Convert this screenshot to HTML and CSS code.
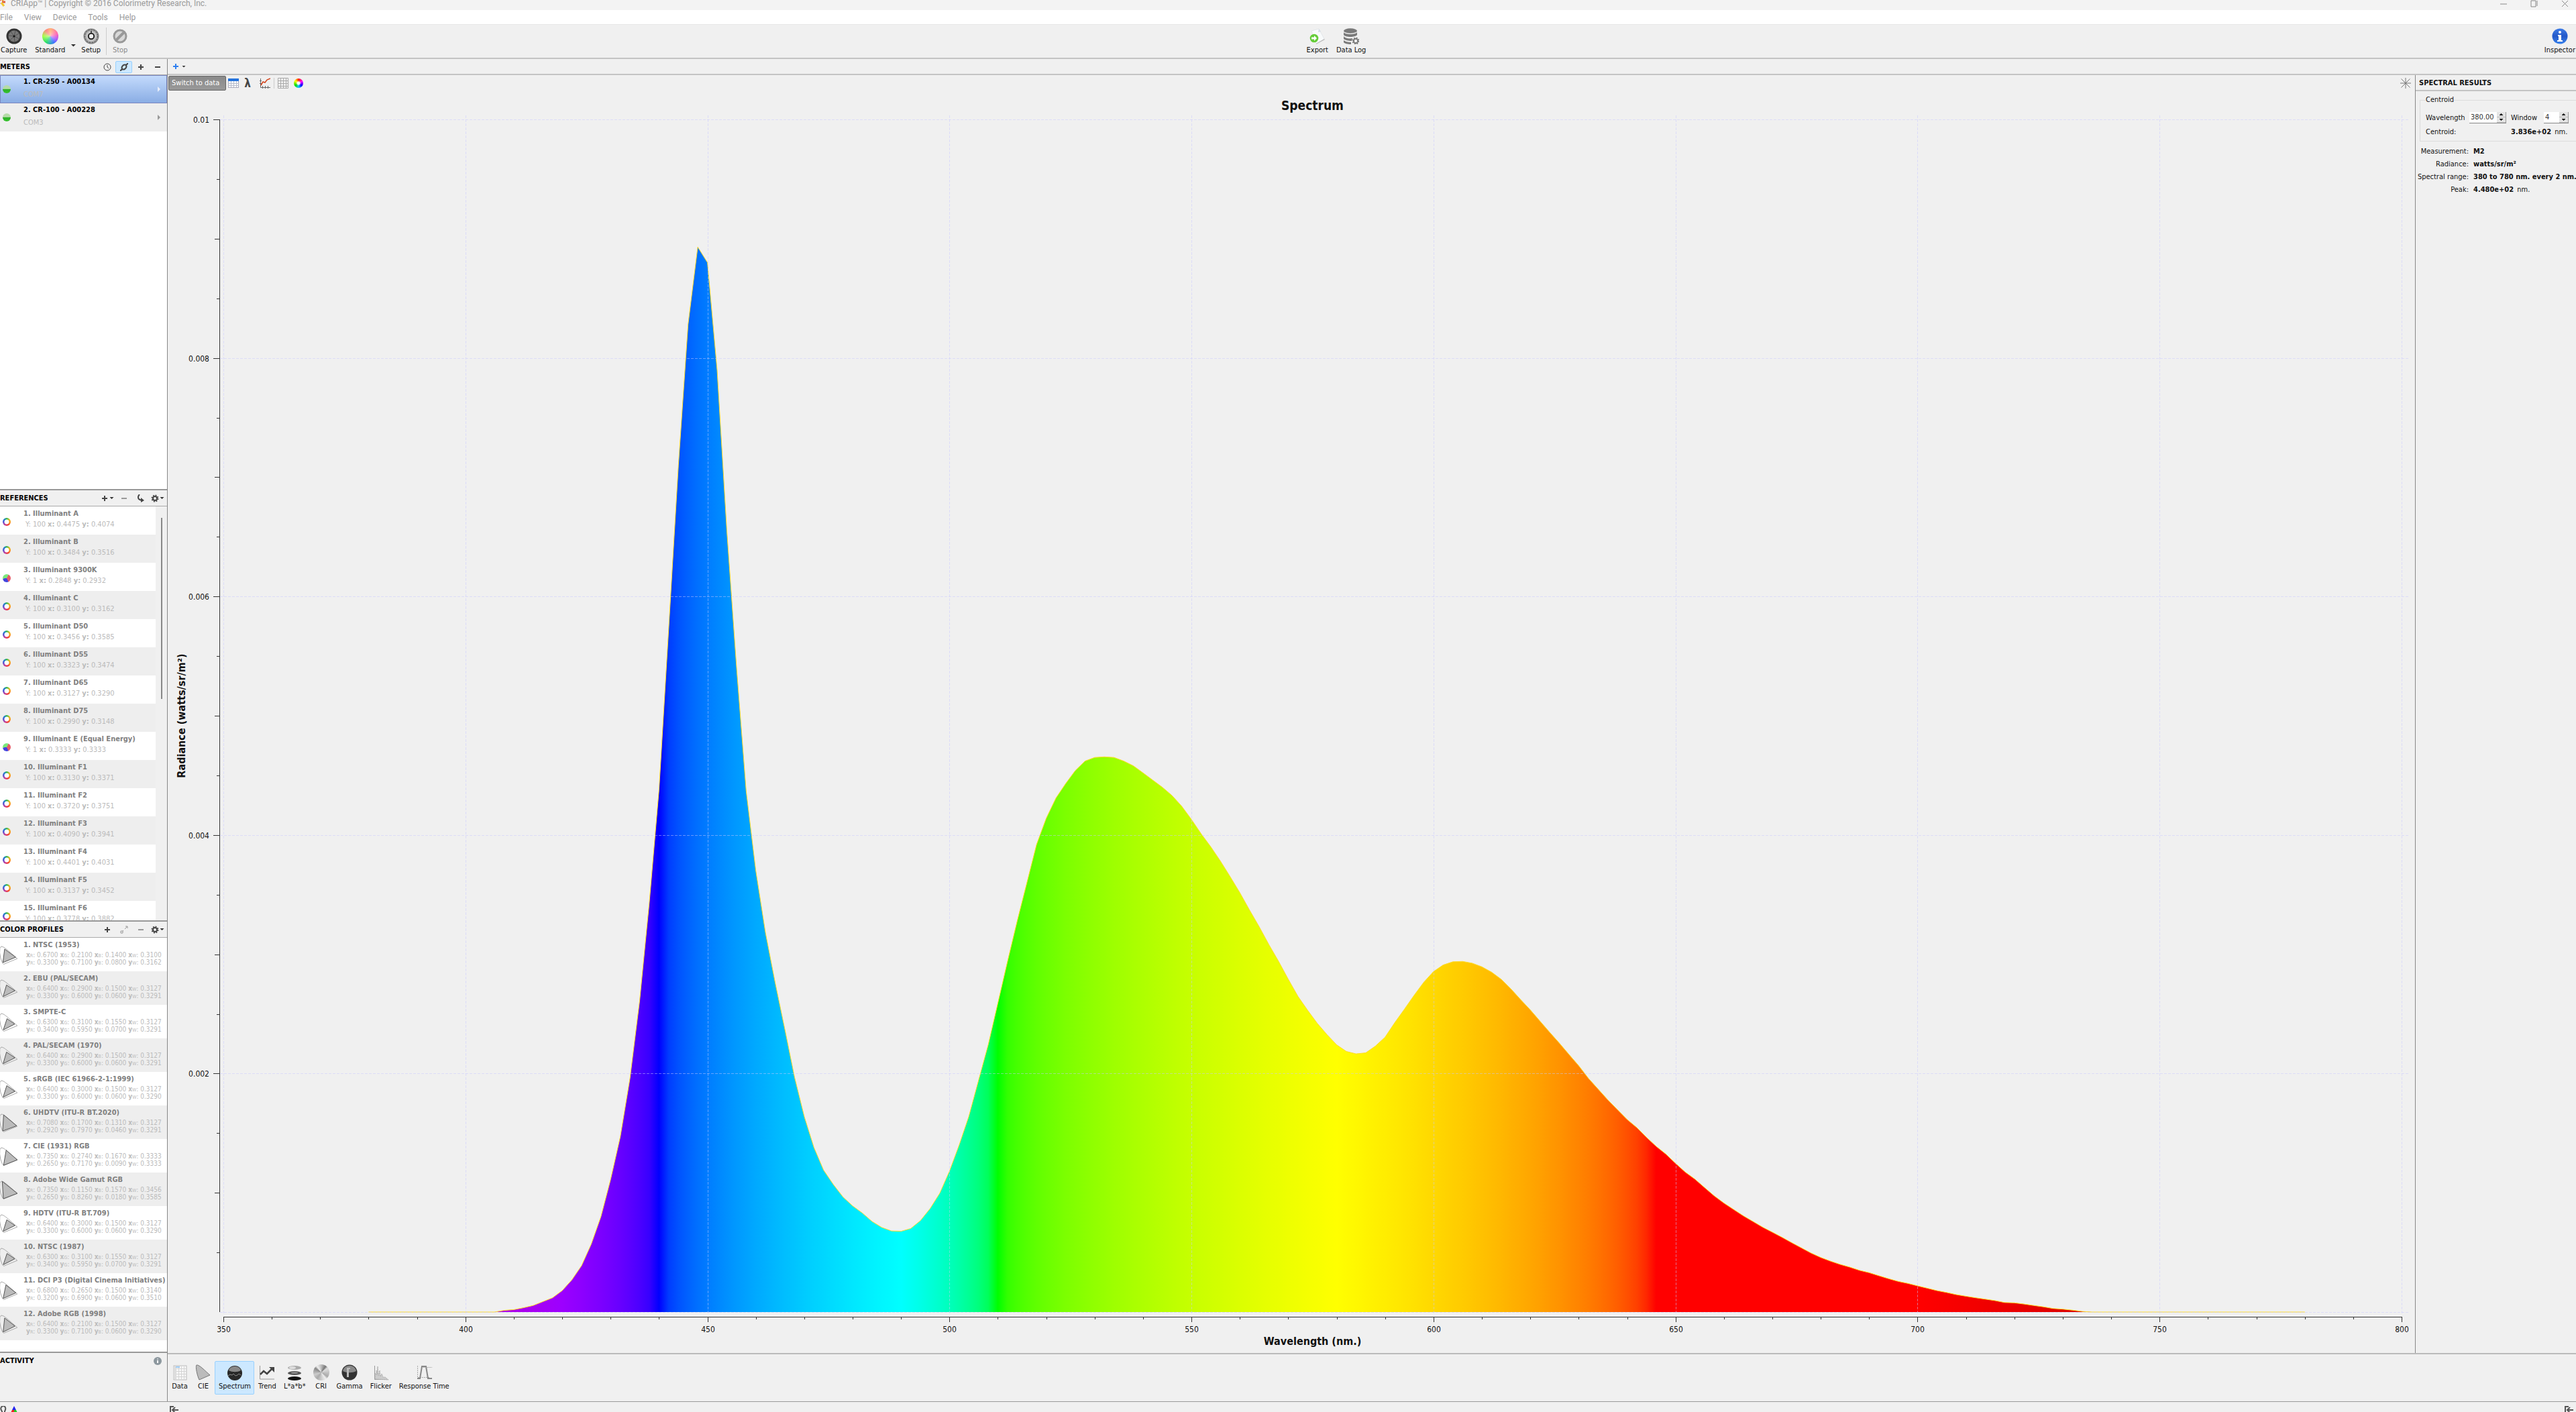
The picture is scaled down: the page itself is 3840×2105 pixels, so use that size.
FILE: index.html
```html
<!DOCTYPE html>
<html lang="en">

<head>
    <meta charset="UTF-8">
    <meta name="viewport" content="width=device-width, initial-scale=1.0">
    <title>CRIApp</title>
    <link rel="stylesheet" href="styles.css">
</head>

<body>

    <header class="titlebar">
        <svg class="app-logo" viewBox="0 0 16 16"><g fill="none" stroke-width="3"><path d="M0 7h6" stroke="#7a9ee0"/><path d="M4 2l3 4" stroke="#e86a4a"/><path d="M9 6l4-4" stroke="#f0a030"/><path d="M9 8h5" stroke="#e0603a"/><path d="M8 9l4 5" stroke="#f2c830"/><path d="M6 9l-4 4" stroke="#b090d0"/></g></svg>
        <span class="app-title">CRIApp™ | Copyright © 2016 Colorimetry Research, Inc.</span>
        <div class="window-buttons">
            <button aria-label="Minimize"><svg viewBox="0 0 12 12"><path d="M1 6h10"/></svg></button>
            <button aria-label="Restore"><svg viewBox="0 0 12 12"><path d="M1 1h7v9h-7zM10 1v8"/></svg></button>
            <button aria-label="Close"><svg viewBox="0 0 12 12"><path d="M1 1l9 9M10 1l-9 9"/></svg></button>
        </div>
    </header>

    <nav class="menubar">
        <button>File</button>
        <button>View</button>
        <button>Device</button>
        <button>Tools</button>
        <button>Help</button>
    </nav>

    <div class="toolbar">
        <div class="tool-group">
            <button class="tool">
                <svg viewBox="0 0 24 24"><circle cx="12" cy="12" r="11.5" fill="#333"/><circle cx="12" cy="12" r="8.5" fill="#777"/><path d="M12 12l2-8M12 12l7-4M12 12l8 4M12 12l1 8M12 12l-6 6M12 12l-8-1M12 12l-5-7" stroke="#444" stroke-width=".7"/><circle cx="12" cy="12" r="1.5" fill="#111"/></svg>
                <span>Capture</span>
            </button>
            <button class="tool">
                <i class="wheel"></i>
                <span>Standard</span>
            </button>
            <button class="caret-button" aria-label="Measurement mode"><i class="caret"></i></button>
            <button class="tool">
                <svg viewBox="0 0 24 24"><defs><radialGradient id="knob"><stop offset=".3" stop-color="#eee"/><stop offset=".75" stop-color="#aaa"/><stop offset="1" stop-color="#777"/></radialGradient></defs><circle cx="12" cy="12" r="11.5" fill="url(#knob)"/><circle cx="12" cy="12" r="9.5" fill="none" stroke="#444" stroke-dasharray="2 2"/><circle cx="12" cy="12" r="4.2" fill="#eee" stroke="#222" stroke-width="2"/><path d="M12 4v4" stroke="#222" stroke-width="1.5"/></svg>
                <span>Setup</span>
            </button>
            <i class="divider"></i>
            <button class="tool" disabled>
                <svg viewBox="0 0 24 24"><circle cx="12" cy="12" r="9" fill="#d8d8d8" stroke="#999" stroke-width="3"/><path d="M6 18L18 6" stroke="#999" stroke-width="4"/></svg>
                <span>Stop</span>
            </button>
        </div>
        <div class="tool-group">
            <button class="tool">
                <svg viewBox="0 0 24 24"><path d="M3 4L14 1l8 15-12 7z" fill="#f8fafb" stroke="#d9dde0" stroke-width=".6"/><path d="M14 1l-1 5 4-1z" fill="#d5dce6"/><path d="M10 24l13-7-1-1-12 7z" fill="#bbb"/><circle cx="7" cy="15" r="6.3" fill="#65cc38"/><path d="M3 13.5h4v-2.5l4 4-4 4v-2.500h-4z" fill="#fff"/></svg>
                <span>Export</span>
            </button>
            <button class="tool">
                <svg viewBox="0 0 24 24"><g fill="#7a7a7a"><ellipse cx="11" cy="4" rx="10" ry="3.700"/><path d="M1 6c2 4 18 4 20 0v4c-2 4-18 4-20 0zM1 12c2 3 8 4 13 3l-1 4c-5 0-10-1-12-3zM1 18c2 2 6 3 11 3v3c-5 0-10-1-11-3z"/></g><circle cx="19" cy="19" r="3.200" fill="none" stroke="#7a7a7a" stroke-width="2"/><circle cx="19" cy="19" r="4.700" fill="none" stroke="#7a7a7a" stroke-width="1.600" stroke-dasharray="2 1.700"/></svg>
                <span>Data Log</span>
            </button>
        </div>
        <div class="tool-group">
            <button class="tool">
                <svg viewBox="0 0 24 24"><defs><linearGradient id="info" x2="0" y2="1"><stop stop-color="#3d7be6"/><stop offset=".5" stop-color="#2358c8"/><stop offset="1" stop-color="#3a83ec"/></linearGradient></defs><circle cx="12" cy="12" r="11.500" fill="url(#info)"/><circle cx="12" cy="6" r="2" fill="#fff"/><path d="M9 10h5v8h2v2H8v-2h2v-6H9z" fill="#fff"/></svg>
                <span>Inspector</span>
            </button>
        </div>
    </div>

    <div class="workspace">
        <aside class="sidebar">
            <section class="panel">
                <div class="panel-head">
                    <h2>METERS</h2>
                    <button aria-label="History"><svg viewBox="0 0 12 12"><circle cx="6" cy="6" r="5"/><path d="M6 3v3l2 2"/></svg></button>
                    <button class="pressed" aria-label="Connect"><svg viewBox="0 0 12 12"><path d="M3.500 9C1.500 7 3 4.500 5 3c2-1 4-.5 4.500 1M8.500 3C10.500 5 9 7.500 7 9c-2 1-4 .5-4.500-1M0 12l3-3M9 3l3-3" stroke-width="2"/></svg></button>
                    <button aria-label="Add meter"><svg viewBox="0 0 12 12"><path d="M2 6h8M6 2v8" stroke-width="2"/></svg></button>
                    <button aria-label="Remove meter"><svg viewBox="0 0 12 12"><path d="M2 6h8" stroke-width="2"/></svg></button>
                </div>
                <ul class="meters">
                    <li class="meter selected">
                        <i class="led"></i>
                        <div><strong>1. CR-250 - A00134</strong><small>COM7</small></div>
                        <i class="arrow"></i>
                    </li>
                    <li class="meter">
                        <i class="led"></i>
                        <div><strong>2. CR-100 - A00228</strong><small>COM3</small></div>
                        <i class="arrow"></i>
                    </li>
                </ul>
            </section>

            <section class="panel">
                <div class="panel-head">
                    <h2>REFERENCES</h2>
                    <button aria-label="Add reference"><svg viewBox="0 0 12 12"><path d="M2 6h8M6 2v8" stroke-width="2"/></svg><i class="caret"></i></button>
                    <button aria-label="Remove reference" disabled><svg viewBox="0 0 12 12"><path d="M2 6h8" stroke-width="2"/></svg></button>
                    <button aria-label="Apply"><svg viewBox="0 0 12 12"><path d="M4 0C1 3 1 8 7 8.500" stroke-width="2"/><path d="M6 5l5 4-5 3z" fill="#444" stroke="none"/></svg></button>
                    <button aria-label="Reference options"><svg viewBox="0 0 12 12"><circle cx="6" cy="6" r="3" stroke-width="2"/><circle cx="6" cy="6" r="4.600" stroke-width="1.800" stroke-dasharray="1.900 1.710"/></svg><i class="caret"></i></button>
                </div>
                <div class="scroller">
                    <ul class="references" id="references"></ul>
                    <div class="scrollbar"><i></i></div>
                </div>
            </section>

            <section class="panel">
                <div class="panel-head">
                    <h2>COLOR PROFILES</h2>
                    <button aria-label="Add profile"><svg viewBox="0 0 12 12"><path d="M2 6h8M6 2v8" stroke-width="2"/></svg></button>
                    <button aria-label="Expand" disabled><svg viewBox="0 0 12 12"><path d="M1 8v3h3v-3zM8 1h3v3M4 8l1-1M7 5l4-4"/></svg></button>
                    <button aria-label="Remove profile" disabled><svg viewBox="0 0 12 12"><path d="M2 6h8" stroke-width="2"/></svg></button>
                    <button aria-label="Profile options"><svg viewBox="0 0 12 12"><circle cx="6" cy="6" r="3" stroke-width="2"/><circle cx="6" cy="6" r="4.600" stroke-width="1.800" stroke-dasharray="1.900 1.710"/></svg><i class="caret"></i></button>
                </div>
                <ul class="profiles" id="profiles"></ul>
            </section>

            <section class="panel activity">
                <div class="panel-head">
                    <h2>ACTIVITY</h2>
                    <button aria-label="Activity info"><svg viewBox="0 0 12 12"><circle cx="6" cy="6" r="6" fill="#8c979e" stroke="none"/><path d="M6 5v4M6 2.500v1" stroke="#fff" stroke-width="2"/></svg></button>
                </div>
            </section>
        </aside>

        <main class="main">
            <div class="tabs">
                <button aria-label="New view"><svg viewBox="0 0 12 12"><path d="M2 6h8M6 2v8" stroke="#2f7ff0" stroke-width="2"/></svg><i class="caret"></i></button>
            </div>
            <div class="content">
                <section class="chart-pane">
                    <div class="chart-tools">
                        <div class="tooltip" role="tooltip">Switch to data</div>
                        <button class="table-button" aria-label="Switch to data"><svg viewBox="0 0 16 16"><rect x=".5" y="1.500" width="15" height="13" fill="#fff" stroke="#aab"/><path d="M0 1h16v4H0z" fill="#2473dc"/><path d="M0 8.500h16M0 11.500h16M4.500 5v9M8.500 5v9M12.500 5v9" stroke="#b7bccb"/></svg></button>
                        <button class="lambda" aria-label="Wavelength">λ</button>
                        <button class="plot-button" aria-label="Plot"><svg viewBox="0 0 16 16"><path d="M1.500 1v13.500H16M4.500 12v4M8.500 12v4M12.500 12v4M0 4.500h3M0 8.500h3" stroke="#666"/><path d="M2 11l3-5 3 1 3-4 5-2" stroke="#d4441c" stroke-width="1.500"/></svg></button>
                        <i class="divider"></i>
                        <button class="grid-button" aria-label="Grid"><svg viewBox="0 0 16 16"><path d="M.5.5h15v15H.5zM.5 4.500h15M.5 8.500h15M.5 12.500h15M4.500.5v15M8.500.5v15M12.500.5v15" stroke="#aaa"/></svg></button>
                        <button class="hue-button" aria-label="Colors"><i class="wheel hue"></i></button>
                        <button class="burst" aria-label="Fit"><svg viewBox="0 0 16 16"><path d="M8 0v16M0 8h16M1.500 1.500l13 13M14.500 1.500l-13 13" stroke="#777"/></svg></button>
                    </div>
                    <div class="chart">
                        <svg id="chart"></svg>
                    </div>
                </section>

                <aside class="inspector">
                    <h2>SPECTRAL RESULTS</h2>
                    <fieldset>
                        <legend>Centroid</legend>
                        <div class="fields">
                            <label for="wavelength">Wavelength</label>
                            <div class="spin">
                                <input type="number" id="wavelength" value="380.00" step="0.01">
                                <div><button aria-label="Increase wavelength"><i></i></button><button aria-label="Decrease wavelength"><i class="down"></i></button></div>
                            </div>
                            <label for="window">Window</label>
                            <div class="spin short">
                                <input type="number" id="window" value="4">
                                <div><button aria-label="Increase window"><i></i></button><button aria-label="Decrease window"><i class="down"></i></button></div>
                            </div>
                            <span class="centroid">Centroid:</span>
                            <span class="centroid-value"><b>3.836e+02</b> nm.</span>
                        </div>
                    </fieldset>
                    <dl>
                        <dt>Measurement:</dt><dd><b>M2</b></dd>
                        <dt>Radiance:</dt><dd><b>watts/sr/m²</b></dd>
                        <dt>Spectral range:</dt><dd><b>380 to 780 nm. every 2 nm.</b></dd>
                        <dt>Peak:</dt><dd><b>4.480e+02</b> nm.</dd>
                    </dl>
                </aside>
            </div>
            <nav class="views">
                <button class="tool">
                    <svg viewBox="0 0 24 24"><rect x="3" y="2" width="19" height="21" fill="#f7f7f7" stroke="#bbb"/><path d="M3 3h4v19H3z" fill="#ddd"/><path d="M7 6.500h15M7 10.500h15M7 14.500h15M7 18.500h15M10.500 3v19M14.500 3v19M18.500 3v19" stroke="#d4d4d4"/><path d="M6 4h6" stroke="#9ccaf4" stroke-width="2"/></svg>
                    <span>Data</span>
                </button>
                <button class="tool">
                    <svg viewBox="0 0 24 24"><path d="M6 23C3 17 0 3 2 1c4-1 13 9 20 15z" fill="#bbb" stroke="#777"/></svg>
                    <span>CIE</span>
                </button>
                <button class="tool active">
                    <svg viewBox="0 0 24 24"><circle cx="12" cy="13" r="11" fill="#282828"/><path d="M3 9C5 1 19 1 21 9c-5 3-13 3-18 0z" fill="#888"/><path d="M2 17l3-2 3 1 2-2 3 3 3-1 2-2 3 2" stroke="#888" fill="none"/></svg>
                    <span>Spectrum</span>
                </button>
                <button class="tool">
                    <svg viewBox="0 0 24 24"><path d="M1.500 2v20H23" fill="none" stroke="#999"/><path d="M2 15l5-5 5 4 8-8" fill="none" stroke="#444" stroke-width="2.500"/><path d="M15 4h8v8z" fill="#444"/></svg>
                    <span>Trend</span>
                </button>
                <button class="tool">
                    <svg viewBox="0 0 24 24"><ellipse cx="12" cy="5" rx="10" ry="3" fill="#aaa"/><ellipse cx="9" cy="5" rx="5" ry="2" fill="#ddd"/><ellipse cx="12" cy="13" rx="10" ry="3" fill="#555"/><ellipse cx="12" cy="12.500" rx="5" ry="1.500" fill="#888"/><ellipse cx="12" cy="21" rx="10" ry="3" fill="#111"/></svg>
                    <span>L*a*b*</span>
                </button>
                <button class="tool">
                    <i class="wheel gray"></i>
                    <span>CRI</span>
                </button>
                <button class="tool">
                    <svg viewBox="0 0 24 24"><circle cx="12" cy="12" r="11.500" fill="#333"/><path d="M2 10C4-1 20-1 22 10c-6 3-14 3-20 0z" fill="#888"/><path d="M8 5h5v2h-2v12H8z" fill="#bbb"/></svg>
                    <span>Gamma</span>
                </button>
                <button class="tool">
                    <svg viewBox="0 0 24 24"><path d="M2.500 2v20.500H23" fill="none" stroke="#999"/><path d="M3 22V13l2 3V9l1 6 1-12 1 14 2-8 1 9 2-4 2 5 3 0 5 4z" fill="#ccc" stroke="#aaa" stroke-dasharray="2 1"/></svg>
                    <span>Flicker</span>
                </button>
                <button class="tool">
                    <svg viewBox="0 0 24 24"><path d="M2.500 2v20.500M8 4.500h16M3 19.500h18" fill="none" stroke="#aaa" stroke-dasharray="2 1"/><path d="M2 21h4l3-18h6l3 18h6" fill="none" stroke="#888" stroke-width="2"/></svg>
                    <span>Response Time</span>
                </button>
            </nav>
        </main>
    </div>

    <footer class="statusbar">
        <div class="status-left">
            <button aria-label="Lamp"><svg viewBox="0 0 14 14"><path d="M3 10V8C-1 3 3 0 5 0s5 3 2 8v6" fill="none" stroke="#555" stroke-width="2"/></svg></button>
            <button aria-label="Gamut"><svg viewBox="0 0 14 14"><path d="M7 0L10 6H4z" fill="#22e"/><path d="M4 6h3v8H0z" fill="#e22"/><path d="M7 6h3l4 8H7z" fill="#2c2"/></svg></button>
        </div>
        <button aria-label="Collapse sidebar"><svg viewBox="0 0 14 14"><path d="M6 1H1v10h5M5 6h8M8 2L4 6l4 4" fill="none" stroke="#555" stroke-width="2"/></svg></button>
        <button class="status-right" aria-label="Collapse inspector"><svg viewBox="0 0 14 14"><path d="M6 1H1v10h5M5 6h8M8 2L4 6l4 4" fill="none" stroke="#555" stroke-width="2"/></svg></button>
    </footer>

    <script src="script.js"></script>
</body>

</html>
```

FILE: styles.css
```css
* {
    box-sizing: border-box;
}

body {
    margin: 0;
    height: 100vh;
    display: flex;
    flex-direction: column;
    overflow: hidden;
    background-color: #f0f0f0;
    color: #111;
    font-family: "DejaVu Sans Condensed", "DejaVu Sans", Tahoma, sans-serif;
    font-size: 11px;
    line-height: 14px;
}

button {
    margin: 0;
    padding: 0;
    border: none;
    background: none;
    color: inherit;
    font: inherit;
}

svg {
    display: block;
}

ul,
dl,
dd,
h2 {
    margin: 0;
    padding: 0;
    list-style: none;
}

h2 {
    font-size: 11px;
    line-height: 14px;
}

/* title and menu */

.titlebar {
    flex: none;
    display: flex;
    height: 15px;
    background-color: #f3f3f3;
    color: #999;
    font-family: Roboto, "Open Sans", sans-serif;
    font-size: 12px;
    line-height: 10px;
    overflow: hidden;
}

.app-logo {
    width: 16px;
    height: 16px;
    margin-top: -5px;
    margin-left: -6px;
}

.app-title {
    margin-left: 6px;
}

.window-buttons {
    display: flex;
    margin-left: auto;
}

.window-buttons button {
    width: 46px;
    padding: 0 18px;
}

.window-buttons button:last-child {
    margin-right: -6px;
}

.window-buttons svg {
    width: 12px;
    height: 12px;
    margin-top: -4px;
    fill: none;
    stroke: #888;
}

.menubar {
    flex: none;
    display: flex;
    gap: 17px;
    height: 22px;
    background-color: #fff;
    border-bottom: 1px solid #e6e6e6;
    color: #999;
    font-family: Roboto, "Open Sans", sans-serif;
    font-size: 12px;
}

/* toolbar */

.toolbar {
    flex: none;
    display: flex;
    justify-content: space-between;
    height: 51px;
    border-bottom: 2px solid #c4c4c4;
}

.tool-group {
    display: flex;
    align-items: center;
}

.tool {
    display: flex;
    flex-direction: column;
    align-items: center;
    gap: 2px;
    padding: 4px 5px;
    border: 1px solid transparent;
    white-space: nowrap;
}

.tool-group:first-child .tool:first-child {
    padding-left: 0;
}

.tool-group:last-child .tool:last-child {
    padding-right: 0;
}

.tool svg,
.tool .wheel {
    width: 24px;
    height: 24px;
}

.tool.active {
    background-color: #cce8ff;
    border-color: #99d1ff;
    border-radius: 2px;
}

.tool:disabled {
    color: #8a8a8a;
}

.wheel {
    display: block;
    width: 14px;
    height: 14px;
    border-radius: 50%;
    background: radial-gradient(rgba(255, 255, 255, 0.5), transparent 70%), conic-gradient(#ffb070, #ff60b0 20%, #a050ff 33%, #3070ff 42%, #20e060 60%, #a0ff40 75%, #ff8080 90%, #ffb070);
}

.wheel.hue {
    background: radial-gradient(#fff 15%, transparent 40%), conic-gradient(#ff2000, #f0f, #00f 35%, #0cf, #0d0 65%, #ff0 85%, #ff2000);
}

.wheel.gray {
    background: conic-gradient(#bbb, #777 10%, #ddd 15%, #aaa 35%, #eee 40%, #aaa 60%, #ccc 70%, #888 85%, #eee 90%, #bbb);
}

.caret {
    flex: none;
    width: 6px;
    height: 3px;
    background-color: #333;
    clip-path: polygon(0 0, 100% 0, 50% 100%);
}

.caret-button {
    width: 12px;
    padding-top: 12px;
}

.caret-button .caret {
    display: block;
    width: 8px;
    height: 4px;
    margin-left: 2px;
}

.divider {
    width: 1px;
    height: 16px;
    background-color: #ccc;
}

.toolbar .divider {
    height: 41px;
    margin: 0 2px;
}

/* sidebar */

.workspace {
    flex: 1;
    display: flex;
    min-height: 0;
}

.sidebar {
    flex: none;
    display: flex;
    flex-direction: column;
    width: 250px;
    border-right: 1px solid #888;
}

.panel {
    flex: 1 1 0;
    display: flex;
    flex-direction: column;
    min-height: 0;
    background-color: #fff;
    border-bottom: 2px solid #999;
    overflow: hidden;
}

.panel-head {
    flex: none;
    display: flex;
    align-items: center;
    height: 24px;
    padding-right: 2px;
    background-color: #f0f0f0;
    border-bottom: 1px solid #aaa;
}

.panel-head h2 {
    flex: 1;
    color: #000;
}

.panel-head button {
    display: flex;
    align-items: center;
    justify-content: center;
    gap: 2px;
    width: 25px;
    height: 18px;
}

.panel-head svg,
.tabs svg {
    flex: none;
    width: 12px;
    height: 12px;
    fill: none;
    stroke: #444;
}

.panel-head button:disabled {
    opacity: 0.5;
}

.panel-head .pressed {
    background-color: #cce8ff;
    border: 1px solid #99d1ff;
    border-radius: 2px;
}

.activity {
    flex: none;
    height: 72px;
    background-color: #f0f0f0;
    border-bottom: none;
}

.activity .panel-head {
    border-bottom: none;
}

.meter {
    display: flex;
    align-items: flex-start;
    height: 42px;
    padding: 3px 10px 0 4px;
    background-color: #eee;
}

.meter.selected {
    background: linear-gradient(#c3dafc, #8aade4);
    border: 1px solid #7a86c0;
    padding: 2px 9px 0 3px;
}

.meter div {
    flex: 1;
    margin-left: 19px;
}

.meter strong,
.meter small,
.reference strong,
.reference small {
    display: block;
}

.meter strong {
    color: #000;
}

.meter small {
    margin-top: 5px;
    color: #bbb;
    font-size: 11px;
}

.led {
    width: 12px;
    height: 12px;
    margin-top: 12px;
    border-radius: 50%;
    background: linear-gradient(#b5dba8 45%, #2fae2a 50%, #35c32c);
}

.arrow {
    width: 4px;
    height: 8px;
    margin-top: 14px;
    background-color: #999;
    clip-path: polygon(0 0, 100% 50%, 0 100%);
}

.selected .arrow {
    background-color: #e8eefa;
}

.scroller {
    flex: 1;
    display: flex;
    min-height: 0;
}

.references {
    flex: 1;
    overflow: hidden;
}

.reference {
    display: flex;
    height: 42px;
    padding: 4px 0 0 4px;
}

.reference:nth-child(even),
.profile:nth-child(even) {
    background-color: #eee;
}

.reference div {
    margin-left: 19px;
}

.reference strong,
.profile strong {
    color: #808080;
}

.reference small {
    margin-top: 2px;
    padding-left: 3px;
    color: #bbb;
    font-size: 11px;
}

.ring,
.pie {
    width: 12px;
    height: 12px;
    margin-top: 13px;
    border-radius: 50%;
}

.ring {
    background: radial-gradient(#fff 3px, transparent 4px), conic-gradient(#2db84d, #e8c020 15%, #ff8a20 30%, #f03838 45%, #c040a0 60%, #5050d8 75%, #2080d0 88%, #2db84d);
}

.pie {
    background: conic-gradient(#7be87b 8%, #e85a68 8% 42%, #4343dd 42% 73%, #7be87b 73%);
}

.scrollbar {
    width: 17px;
    padding-top: 17px;
    background-color: #f0f0f0;
}

.scrollbar i {
    display: block;
    width: 2px;
    height: 45%;
    margin-left: 8px;
    background-color: #888;
}

.profile {
    display: flex;
    height: 50px;
    padding-top: 4px;
    white-space: nowrap;
}

.profile svg {
    flex: none;
    width: 26px;
    height: 40px;
    margin-right: 9px;
}

.profile table {
    border-collapse: collapse;
    margin: 2px 0 0 4px;
    color: #bbb;
    font-size: 10px;
    line-height: 11px;
}

.profile td {
    padding: 0 3px 0 0;
}

.profile sub {
    font-size: 7px;
    line-height: 1;
    vertical-align: baseline;
}

/* main area */

.main {
    flex: 1;
    display: flex;
    flex-direction: column;
    min-width: 0;
}

.tabs {
    flex: none;
    height: 24px;
    border-bottom: 2px solid #c4c4c4;
}

.tabs button {
    display: flex;
    align-items: center;
    gap: 3px;
    height: 22px;
    padding-left: 6px;
}

.content {
    flex: 1;
    display: flex;
    min-height: 0;
}

.chart-pane {
    flex: 1;
    display: flex;
    flex-direction: column;
    min-width: 0;
}

.chart-tools {
    position: relative;
    flex: none;
    display: flex;
    align-items: center;
    gap: 5px;
    height: 24px;
    padding: 0 6px 0 90px;
}

.chart-tools svg {
    width: 16px;
    height: 16px;
    fill: none;
}

.lambda {
    width: 16px;
    font-size: 17px;
    font-weight: bold;
    color: #444;
}

.plot-button {
    margin-left: 5px;
}

.hue-button {
    margin-left: 3px;
}

.chart-tools .burst {
    margin-left: auto;
}

.tooltip {
    position: absolute;
    left: 1px;
    top: 1px;
    width: 86px;
    padding: 3px 4px;
    background: linear-gradient(#8a8a8a, #999);
    border: 1px solid #666;
    border-radius: 2px;
    color: #fff;
    white-space: nowrap;
}

.chart {
    flex: 1;
    min-height: 0;
    overflow: hidden;
}

.chart svg {
    width: 100%;
    height: 100%;
}

.chart text {
    fill: #111;
    font-size: 12px;
}

.chart .chart-title {
    font-size: 19px;
    font-weight: bold;
}

.chart .axis-title {
    font-size: 16px;
    font-weight: bold;
}

.axis {
    fill: none;
    stroke: #333;
    shape-rendering: crispEdges;
}

.grid {
    fill: none;
    stroke: #c8c8ff;
    stroke-opacity: 0.5;
    stroke-dasharray: 4 2;
}

.curve {
    stroke: #ffdc28;
}

/* inspector */

.inspector {
    flex: none;
    width: 240px;
    border-left: 1px solid #888;
    overflow: hidden;
    white-space: nowrap;
}

.inspector h2 {
    padding: 5px 5px 3px;
    border-bottom: 2px solid #c4c4c4;
}

.inspector fieldset {
    margin: 6px -6px 0 6px;
    padding: 11px 8px 6px;
    border: 1px solid #dcdcdc;
}

.inspector legend {
    padding: 0;
}

.fields {
    display: grid;
    grid-template-columns: 58px 55px 42px 37px;
    align-items: center;
    column-gap: 7px;
    row-gap: 6px;
}

.spin {
    display: flex;
    height: 17px;
    background-color: #fff;
    border-bottom: 1px solid #888;
}

.spin input {
    flex: 1;
    min-width: 0;
    padding: 0 2px;
    border: none;
    background: none;
    color: #333;
    font: inherit;
    appearance: textfield;
}

.spin input::-webkit-inner-spin-button {
    display: none;
}

.spin div {
    display: flex;
    flex-direction: column;
    width: 14px;
    background-color: #e4e4e4;
    border-right: 1px solid #999;
}

.spin div button {
    flex: 1;
    display: flex;
    align-items: center;
    justify-content: center;
    border-bottom: 1px solid #bbb;
}

.spin i {
    width: 6px;
    height: 3px;
    background-color: #000;
    clip-path: polygon(50% 0, 100% 100%, 0 100%);
}

.spin .down {
    clip-path: polygon(0 0, 100% 0, 50% 100%);
}

.centroid {
    grid-column: 1 / 3;
}

.centroid-value {
    grid-column: 3 / 5;
}

.inspector b {
    margin-right: 2px;
}

.inspector dl {
    display: grid;
    grid-template-columns: 74px auto;
    justify-content: start;
    gap: 5px 7px;
    margin: 8px 0 0 5px;
}

.inspector dt {
    justify-self: end;
}

/* bottom */

.views {
    flex: none;
    display: flex;
    align-items: center;
    height: 72px;
    border-top: 2px solid #bbb;
}

.views .tool {
    padding: 4px 4px 4px 5px;
}

.statusbar {
    flex: none;
    display: flex;
    height: 16px;
    padding: 6px 3px 0 0;
    border-top: 1px solid #999;
    overflow: hidden;
}

.statusbar svg {
    width: 14px;
    height: 14px;
}

.status-left {
    display: flex;
    gap: 14px;
    width: 253px;
}

.status-left button:first-child {
    width: 0;
}

.status-right {
    margin-left: auto;
}
```

FILE: script.js
```js
const references = [
    ['Illuminant A', 100, '0.4475', '0.4074'],
    ['Illuminant B', 100, '0.3484', '0.3516'],
    ['Illuminant 9300K', 1, '0.2848', '0.2932'],
    ['Illuminant C', 100, '0.3100', '0.3162'],
    ['Illuminant D50', 100, '0.3456', '0.3585'],
    ['Illuminant D55', 100, '0.3323', '0.3474'],
    ['Illuminant D65', 100, '0.3127', '0.3290'],
    ['Illuminant D75', 100, '0.2990', '0.3148'],
    ['Illuminant E (Equal Energy)', 1, '0.3333', '0.3333'],
    ['Illuminant F1', 100, '0.3130', '0.3371'],
    ['Illuminant F2', 100, '0.3720', '0.3751'],
    ['Illuminant F3', 100, '0.4090', '0.3941'],
    ['Illuminant F4', 100, '0.4401', '0.4031'],
    ['Illuminant F5', 100, '0.3137', '0.3452'],
    ['Illuminant F6', 100, '0.3778', '0.3882']
];

// name, x of R G B W, y of R G B W
const profiles = [
    ['NTSC (1953)', ['0.6700', '0.2100', '0.1400', '0.3100'], ['0.3300', '0.7100', '0.0800', '0.3162']],
    ['EBU (PAL/SECAM)', ['0.6400', '0.2900', '0.1500', '0.3127'], ['0.3300', '0.6000', '0.0600', '0.3291']],
    ['SMPTE-C', ['0.6300', '0.3100', '0.1550', '0.3127'], ['0.3400', '0.5950', '0.0700', '0.3291']],
    ['PAL/SECAM (1970)', ['0.6400', '0.2900', '0.1500', '0.3127'], ['0.3300', '0.6000', '0.0600', '0.3291']],
    ['sRGB (IEC 61966-2-1:1999)', ['0.6400', '0.3000', '0.1500', '0.3127'], ['0.3300', '0.6000', '0.0600', '0.3290']],
    ['UHDTV (ITU-R BT.2020)', ['0.7080', '0.1700', '0.1310', '0.3127'], ['0.2920', '0.7970', '0.0460', '0.3291']],
    ['CIE (1931) RGB', ['0.7350', '0.2740', '0.1670', '0.3333'], ['0.2650', '0.7170', '0.0090', '0.3333']],
    ['Adobe Wide Gamut RGB', ['0.7350', '0.1150', '0.1570', '0.3456'], ['0.2650', '0.8260', '0.0180', '0.3585']],
    ['HDTV (ITU-R BT.709)', ['0.6400', '0.3000', '0.1500', '0.3127'], ['0.3300', '0.6000', '0.0600', '0.3290']],
    ['NTSC (1987)', ['0.6300', '0.3100', '0.1550', '0.3127'], ['0.3400', '0.5950', '0.0700', '0.3291']],
    ['DCI P3 (Digital Cinema Initiatives)', ['0.6800', '0.2650', '0.1500', '0.3140'], ['0.3200', '0.6900', '0.0600', '0.3510']],
    ['Adobe RGB (1998)', ['0.6400', '0.2100', '0.1500', '0.3127'], ['0.3300', '0.7100', '0.0600', '0.3290']]
];

// radiance in 1e-5 watts/sr/m2, one sample every 2 nm from 406 nm
const samples = [
    0, 1.4, 2, 3.6, 5.5, 8.7, 12, 18, 27, 39, 57, 80, 111, 147, 196, 261, 344,
    438, 573, 710, 828, 893, 880, 790, 656, 542, 437, 370, 318, 276, 237, 197,
    164, 138, 119, 107, 96.5, 89, 83, 76, 71, 68, 67.7, 70, 76.6, 86.7, 99.6,
    118, 140, 164, 194, 224, 259, 294, 328, 360, 392, 414, 431, 443, 454, 462,
    465, 465.5, 465, 462, 458, 452, 446, 440, 433, 424, 413, 401, 390, 378,
    365, 351.5, 337, 323, 308, 294, 279, 264.6, 253, 242, 232.6, 224, 218.5,
    216.5, 217.3, 223, 230.5, 242.7, 254, 265.6, 276.6, 285.5, 291, 293.7, 294,
    292.5, 289.5, 285, 279, 271, 262, 253.4, 244, 234.6, 225.5, 216, 206.5,
    196, 187, 178, 169.7, 161.5, 154.7, 146.5, 139, 132.5, 124.7, 117.4, 111.5,
    104.4, 97.4, 91.4, 86, 80.7, 76, 71.2, 67, 62.7, 58.2, 53.8, 49.5, 45.8,
    42.7, 40, 37.7, 35, 33, 30.5, 28, 25.7, 24, 22, 20, 18, 16.4, 14.6, 13.3,
    12, 10.8, 9.6, 8, 7.7, 6.7, 5.5, 4.4, 3, 2.4, 1.6, 0.5, 0
];

const locus = [
    [0.175, 0.005], [0.144, 0.03], [0.11, 0.087], [0.045, 0.295], [0.008, 0.538],
    [0.014, 0.75], [0.074, 0.834], [0.155, 0.806], [0.23, 0.754], [0.373, 0.624],
    [0.512, 0.487], [0.627, 0.372], [0.735, 0.265]
];

const showReferences = () => {
    document.getElementById('references').innerHTML = references.map(([name, Y, x, y], i) => `
        <li class="reference">
            <i class="${Y === 1 ? 'pie' : 'ring'}"></i>
            <div><strong>${i + 1}. ${name}</strong><small>Y: ${Y} <b>x:</b> ${x} <b>y:</b> ${y}</small></div>
        </li>`).join('');
}

const toIcon = ([x, y]) => (36 * x - 0.7).toFixed(1) + ',' + (35.6 - 32 * y).toFixed(1);

const showProfiles = () => {
    const row = (axis, values) => '<tr>' + values.map((v, i) =>
        `<td><b>${axis}</b><sub>${'RGBW'[i]}</sub>: ${v}</td>`).join('') + '</tr>';

    document.getElementById('profiles').innerHTML = profiles.map(([name, xs, ys], i) => `
        <li class="profile">
            <svg viewBox="0 0 26 40">
                <polygon points="${locus.map(toIcon).join(' ')}" fill="none" stroke="#aaa"/>
                <polygon points="${[0, 1, 2].map(k => toIcon([xs[k], ys[k]])).join(' ')}" fill="#bbb" stroke="#555"/>
            </svg>
            <div><strong>${i + 1}. ${name}</strong><table>${row('x', xs)}${row('y', ys)}</table></div>
        </li>`).join('');
}

// approximate display color of a wavelength
const color = (nm) => {
    let r = 0, g = 0, b = 0;
    if (nm < 440) { r = (440 - nm) / 60; b = 1; }
    else if (nm < 490) { g = (nm - 440) / 50; b = 1; }
    else if (nm < 510) { g = 1; b = (510 - nm) / 20; }
    else if (nm < 580) { r = (nm - 510) / 70; g = 1; }
    else if (nm < 645) { r = 1; g = (645 - nm) / 65; }
    else { r = 1; }

    let level = 1;
    if (nm < 420) level = 0.3 + 0.7 * (nm - 380) / 40;
    if (nm > 700) level = 0.3 + 0.7 * (780 - nm) / 80;
    return 'rgb(' + [r, g, b].map(c => Math.round(255 * Math.pow(c * level, 0.45))).join(',') + ')';
}

const drawChart = () => {
    const svg = document.getElementById('chart');
    const { width, height } = svg.getBoundingClientRect();
    const left = 83, right = width - 20, top = 42, bottom = height - 61;
    const px = nm => left + (nm - 350) / 450 * (right - left);
    const py = v => bottom - v / 1000 * (bottom - top);

    let grid = '', ticks = '', labels = '', stops = '';

    for (let nm = 350; nm <= 800; nm += 10) {
        const x = Math.round(px(nm)) + 0.5;
        const major = nm % 50 === 0;
        ticks += `M${x} ${bottom + 7}v${major ? 8 : 4}`;
        if (major) {
            grid += `M${x} ${top - 6}V${bottom + 3}`;
            labels += `<text x="${x}" y="${bottom + 30}" text-anchor="middle">${nm}</text>`;
        }
    }

    for (let v = 0; v <= 1000; v += 50) {
        const y = Math.round(py(v)) + 0.5;
        const major = v % 200 === 0;
        if (v > 0) ticks += `M${left - 6} ${y}h${major ? -9 : v % 100 === 0 ? -7 : -4}`;
        if (major) {
            grid += `M${left - 5} ${y}H${right + 10}`;
            if (v > 0) labels += `<text x="${left - 21}" y="${y + 4}" text-anchor="end">${v / 100000}</text>`;
        }
    }

    for (let nm = 380; nm <= 780; nm += 2) {
        stops += `<stop offset="${(nm - 380) / 400}" stop-color="${color(nm)}"/>`;
    }

    const points = samples.map((v, i) => px(406 + i * 2).toFixed(1) + ' ' + py(v).toFixed(1)).join('L');
    const middle = (left + right) / 2;
    const center = (top + bottom) / 2;

    svg.innerHTML = `
        <defs><linearGradient id="spectrum" gradientUnits="userSpaceOnUse" x1="${px(380)}" x2="${px(780)}">${stops}</linearGradient></defs>
        <path class="curve" fill="url(#spectrum)" d="M${px(380)} ${bottom}L${points}L${px(780)} ${bottom}"/>
        <path class="grid" d="${grid}"/>
        <path class="axis" d="M${left - 6} ${top}V${bottom}M${left} ${bottom + 7}H${right}${ticks}"/>
        ${labels}
        <text class="chart-title" x="${middle}" y="28" text-anchor="middle">Spectrum</text>
        <text class="axis-title" x="${middle}" y="${bottom + 49}" text-anchor="middle">Wavelength (nm.)</text>
        <text class="axis-title" transform="translate(26 ${center}) rotate(-90)" text-anchor="middle">Radiance (watts/sr/m²)</text>`;
}

showReferences();
showProfiles();
drawChart();
window.addEventListener('resize', drawChart);
```
